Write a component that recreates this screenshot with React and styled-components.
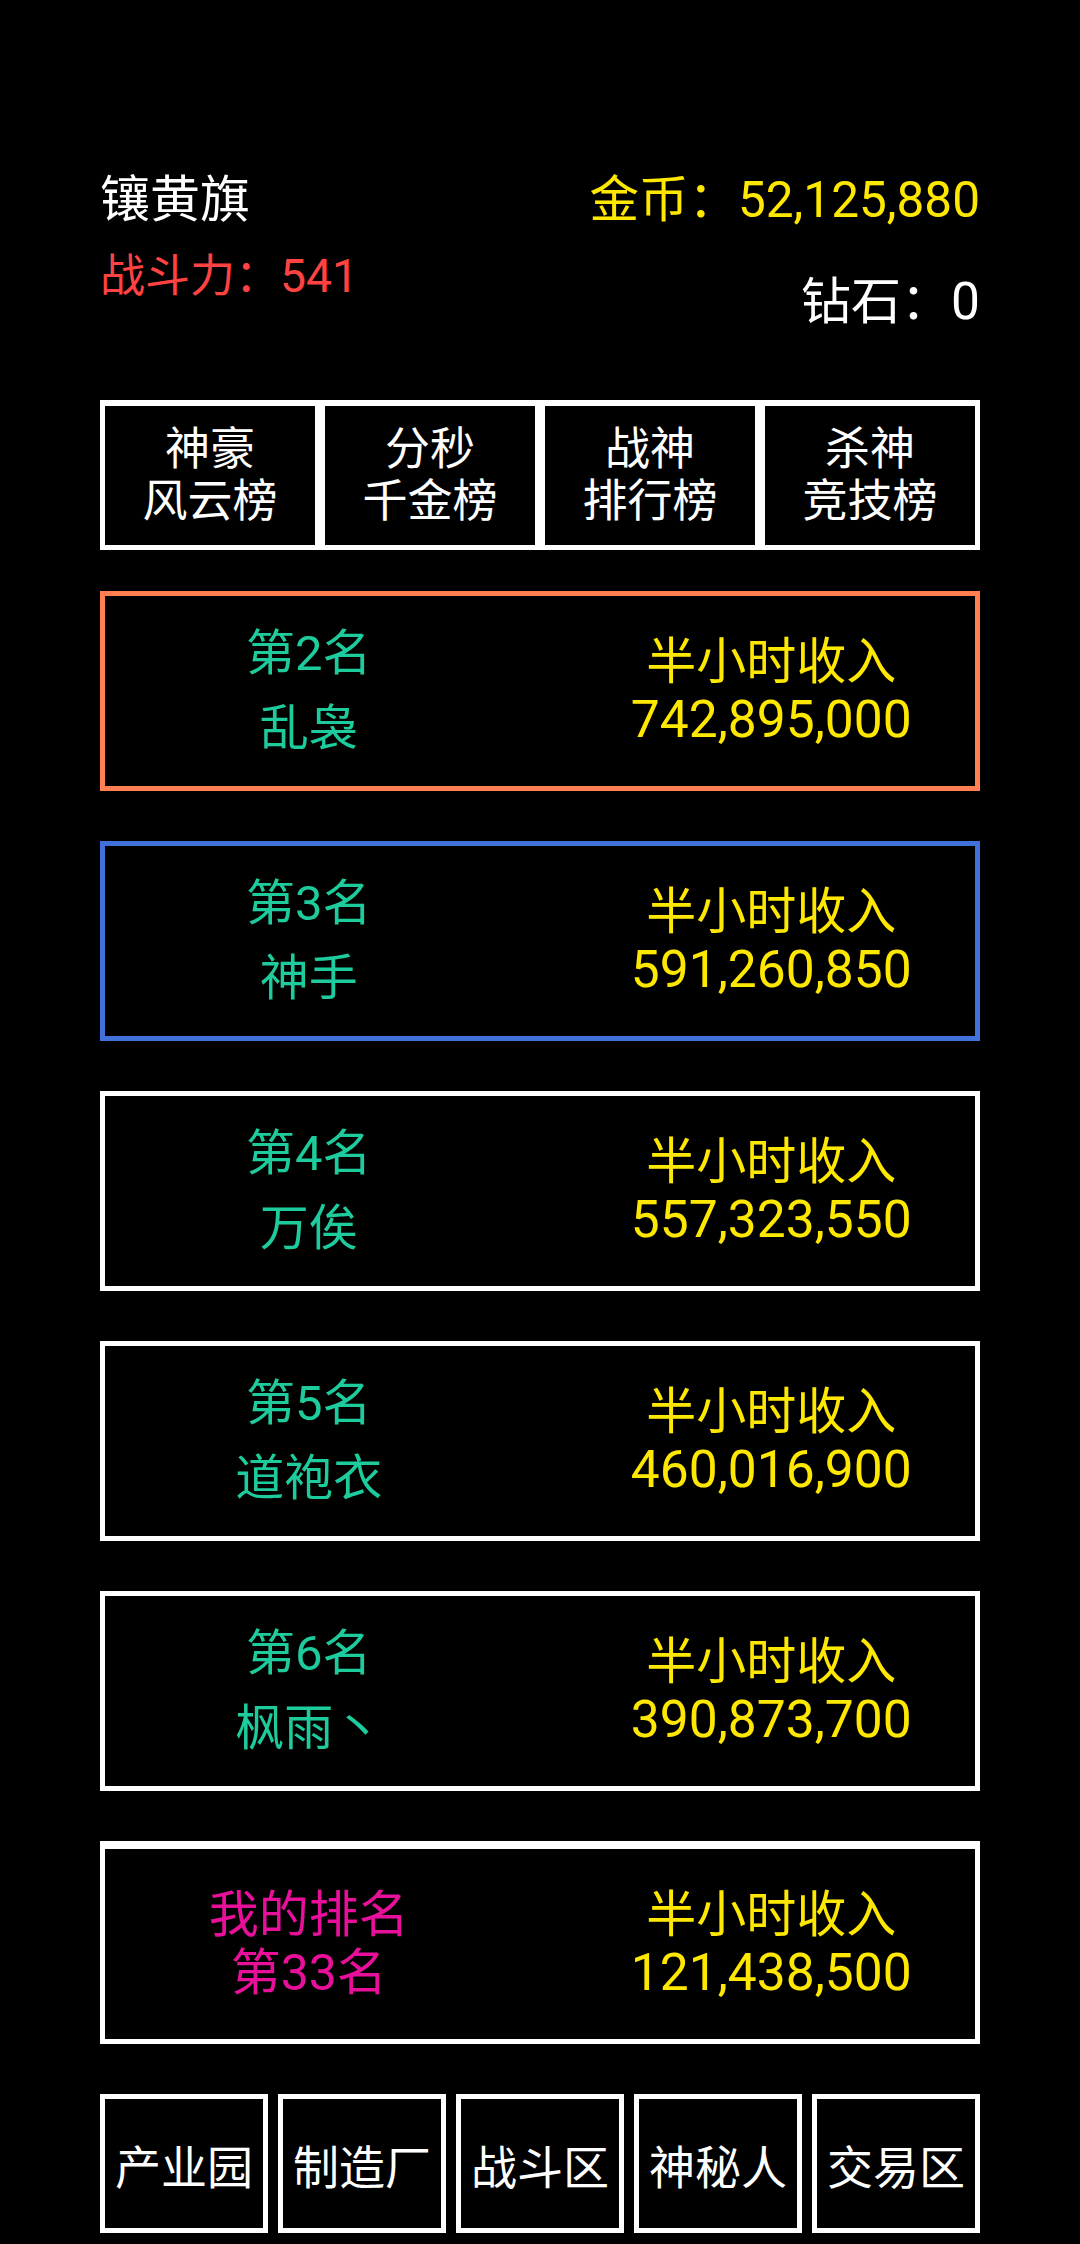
import React from 'react';
import styled, { createGlobalStyle } from 'styled-components';

const GlobalStyle = createGlobalStyle`
  html, body {
    margin: 0;
    padding: 0;
    background: #000;
  }
  body {
    font-family: Roboto, "Noto Sans CJK SC", "Noto Sans", sans-serif;
  }
`;

const Page = styled.div`
  width: 1080px;
  min-height: 2244px;
  box-sizing: border-box;
  padding: 170px 100px 0;
  background: #000;
  color: #fff;
`;

const Header = styled.div`
  display: flex;
  justify-content: space-between;
  align-items: flex-start;
`;

const HeaderCol = styled.div`
  display: flex;
  flex-direction: column;
  align-items: ${p => (p.$right ? 'flex-end' : 'flex-start')};
`;

const HeaderText = styled.div`
  font-size: ${p => p.$size || 50}px;
  line-height: 60px;
  color: ${p => p.$color || '#fff'};
  margin-top: ${p => p.$top || 0}px;
  white-space: nowrap;
`;

const Num = styled.span`
  font-size: 1.03em;
`;

const Tabs = styled.div`
  display: flex;
  margin-top: 68px;
`;

const Tab = styled.div`
  flex: 1;
  height: 150px;
  box-sizing: border-box;
  border: 5px solid #fff;
  border-top-width: 6px;
  display: flex;
  flex-direction: column;
  align-items: center;
  justify-content: center;
  font-size: 45px;
  line-height: 52px;
  color: #fff;
`;

const CardList = styled.div`
  display: flex;
  flex-direction: column;
  gap: 50px;
  margin-top: 41px;
`;

const Card = styled.div`
  height: ${p => (p.$mine ? 203 : 200)}px;
  box-sizing: border-box;
  border: 5px solid ${p => p.$border || '#fff'};
  border-top-width: ${p => (p.$mine ? 8 : 5)}px;
  display: grid;
  grid-template-columns: 1fr 1fr;
  column-gap: 55px;
  align-items: center;
`;

const Col = styled.div`
  display: flex;
  flex-direction: column;
  align-items: center;
  font-size: ${p => p.$size}px;
  line-height: ${p => p.$line}px;
  color: ${p => p.$color};
  white-space: nowrap;
`;

const Nav = styled.div`
  display: flex;
  gap: 10px;
  margin-top: 50px;
`;

const NavButton = styled.div`
  flex: 1;
  height: 139px;
  box-sizing: border-box;
  border: 5px solid #fff;
  display: flex;
  align-items: center;
  justify-content: center;
  font-size: 46px;
  color: #fff;
`;

const tabs = [
  ['神豪', '风云榜'],
  ['分秒', '千金榜'],
  ['战神', '排行榜'],
  ['杀神', '竞技榜'],
];

const ranks = [
  { rank: 2, name: '乱袅', income: '742,895,000', border: '#ff7f50' },
  { rank: 3, name: '神手', income: '591,260,850', border: '#4070d8' },
  { rank: 4, name: '万俟', income: '557,323,550' },
  { rank: 5, name: '道袍衣', income: '460,016,900' },
  { rank: 6, name: '枫雨丶', income: '390,873,700' },
];

const navItems = ['产业园', '制造厂', '战斗区', '神秘人', '交易区'];

const TEAL = '#1ecb9c';
const YELLOW = '#ffe800';

export default function App() {
  return (
    <>
      <GlobalStyle />
      <Page>
        <Header>
          <HeaderCol>
            <HeaderText>镶黄旗</HeaderText>
            <HeaderText $size={45} $color="#ff4242" $top={16}>
              战斗力：<Num>541</Num>
            </HeaderText>
          </HeaderCol>
          <HeaderCol $right>
            <HeaderText $size={49.5} $color={YELLOW}>
              金币：52,125,880
            </HeaderText>
            <HeaderText $top={42}>
              钻石：<Num>0</Num>
            </HeaderText>
          </HeaderCol>
        </Header>

        <Tabs>
          {tabs.map(([a, b]) => (
            <Tab key={a + b}>
              <span>{a}</span>
              <span>{b}</span>
            </Tab>
          ))}
        </Tabs>

        <CardList>
          {ranks.map(r => (
            <Card key={r.rank} $border={r.border}>
              <Col $size={49} $line={75} $color={TEAL}>
                <span>第{r.rank}名</span>
                <span>{r.name}</span>
              </Col>
              <Col $size={50} $line={58} $color={YELLOW}>
                <span>半小时收入</span>
                <Num>{r.income}</Num>
              </Col>
            </Card>
          ))}
          <Card $mine>
            <Col $size={50} $line={58} $color="#e8109a">
              <span>我的排名</span>
              <span>第33名</span>
            </Col>
            <Col $size={50} $line={58} $color={YELLOW}>
              <span>半小时收入</span>
              <Num>121,438,500</Num>
            </Col>
          </Card>
        </CardList>

        <Nav>
          {navItems.map(n => (
            <NavButton key={n}>{n}</NavButton>
          ))}
        </Nav>
      </Page>
    </>
  );
}
